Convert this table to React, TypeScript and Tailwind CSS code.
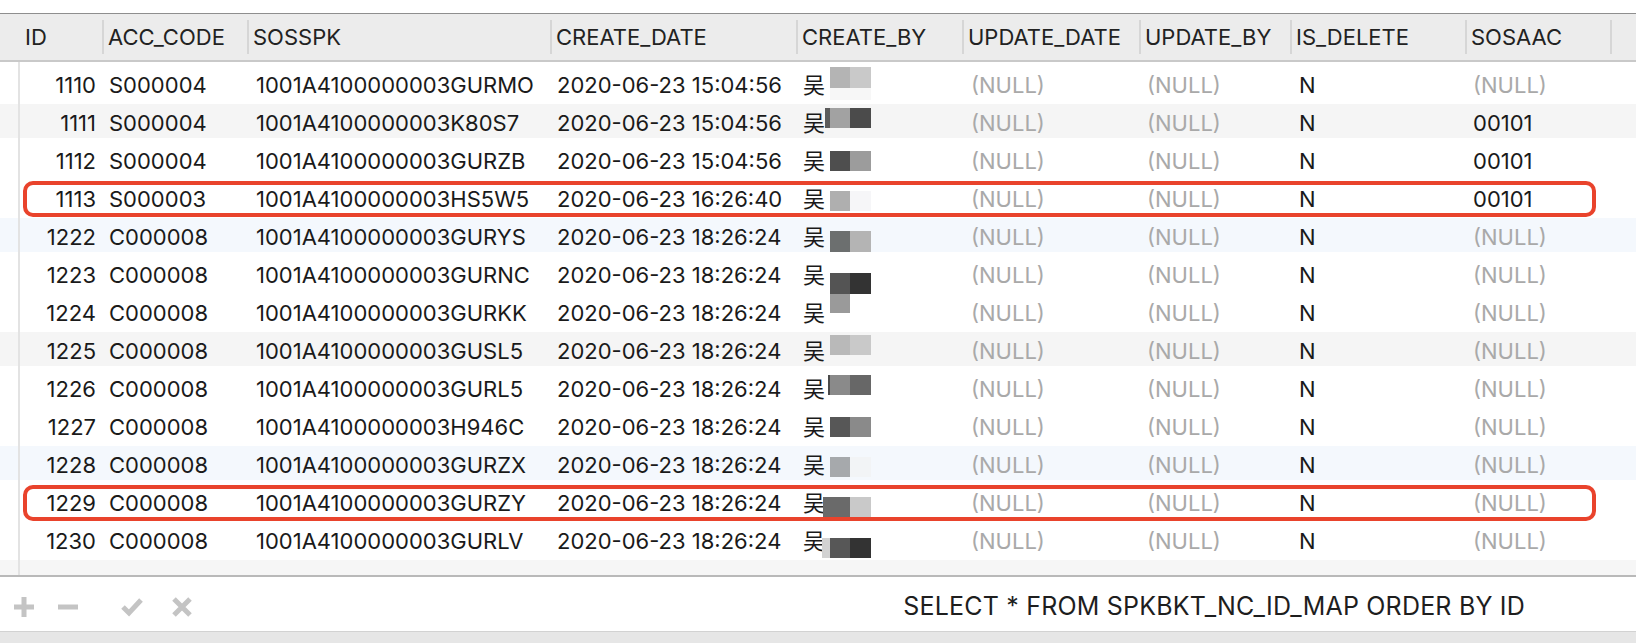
import React from 'react';

type Col = { key: string; label: string; width: number; right?: boolean };

const columns: Col[] = [
  { key: 'id', label: 'ID', width: 82, right: true },
  { key: 'acc', label: 'ACC_CODE', width: 145 },
  { key: 'sosspk', label: 'SOSSPK', width: 303 },
  { key: 'cdate', label: 'CREATE_DATE', width: 246 },
  { key: 'cby', label: 'CREATE_BY', width: 166 },
  { key: 'udate', label: 'UPDATE_DATE', width: 177 },
  { key: 'uby', label: 'UPDATE_BY', width: 151 },
  { key: 'del', label: 'IS_DELETE', width: 175 },
  { key: 'sosaac', label: 'SOSAAC', width: 145 },
];

// mosaic blocks drawn after the name: [x, y, w, h, colour]
type Block = [number, number, number, number, string];

type Row = {
  id: string;
  acc: string;
  sosspk: string;
  date: string;
  sosaac: string | null;
  shade?: string;
  marked?: boolean;
  blocks: Block[];
};

const rows: Row[] = [
  { id: '1110', acc: 'S000004', sosspk: '1001A4100000003GURMO', date: '2020-06-23 15:04:56', sosaac: null,
    blocks: [[8, 1, 20, 21, '#b4b4b4'], [28, 1, 21, 21, '#c9c9c9'], [8, 22, 41, 12, '#f7f7f7']] },
  { id: '1111', acc: 'S000004', sosspk: '1001A4100000003K80S7', date: '2020-06-23 15:04:56', sosaac: '00101', shade: '#f5f5f5',
    blocks: [[3, 4, 5, 20, '#5c5c5c'], [8, 4, 20, 20, '#a2a2a2'], [28, 4, 21, 20, '#4b4b4b']] },
  { id: '1112', acc: 'S000004', sosspk: '1001A4100000003GURZB', date: '2020-06-23 15:04:56', sosaac: '00101',
    blocks: [[8, 9, 20, 20, '#4e4e4e'], [28, 9, 21, 20, '#9c9c9c']] },
  { id: '1113', acc: 'S000003', sosspk: '1001A4100000003HS5W5', date: '2020-06-23 16:26:40', sosaac: '00101', marked: true,
    blocks: [[8, 11, 20, 20, '#afafaf'], [28, 11, 21, 20, '#f6f6f8']] },
  { id: '1222', acc: 'C000008', sosspk: '1001A4100000003GURYS', date: '2020-06-23 18:26:24', sosaac: null, shade: '#f4f8fd',
    blocks: [[8, 13, 20, 21, '#6c6f6f'], [28, 13, 21, 21, '#b4b4b4']] },
  { id: '1223', acc: 'C000008', sosspk: '1001A4100000003GURNC', date: '2020-06-23 18:26:24', sosaac: null,
    blocks: [[8, 17, 20, 21, '#545454'], [28, 17, 21, 21, '#333333']] },
  { id: '1224', acc: 'C000008', sosspk: '1001A4100000003GURKK', date: '2020-06-23 18:26:24', sosaac: null,
    blocks: [[8, 0, 20, 19, '#9a9a9a']] },
  { id: '1225', acc: 'C000008', sosspk: '1001A4100000003GUSL5', date: '2020-06-23 18:26:24', sosaac: null, shade: '#f5f5f5',
    blocks: [[8, 3, 20, 20, '#b9b9b9'], [28, 3, 21, 20, '#c9c9c9']] },
  { id: '1226', acc: 'C000008', sosspk: '1001A4100000003GURL5', date: '2020-06-23 18:26:24', sosaac: null,
    blocks: [[6, 5, 2, 20, '#4a4a4a'], [8, 5, 20, 20, '#8a8a8a'], [28, 5, 21, 20, '#676767']] },
  { id: '1227', acc: 'C000008', sosspk: '1001A4100000003H946C', date: '2020-06-23 18:26:24', sosaac: null,
    blocks: [[8, 9, 20, 20, '#575757'], [28, 9, 21, 20, '#8a8a8a']] },
  { id: '1228', acc: 'C000008', sosspk: '1001A4100000003GURZX', date: '2020-06-23 18:26:24', sosaac: null, shade: '#f4f8fd',
    blocks: [[8, 11, 20, 20, '#a6a9ac'], [28, 11, 21, 20, '#f2f4f6']] },
  { id: '1229', acc: 'C000008', sosspk: '1001A4100000003GURZY', date: '2020-06-23 18:26:24', sosaac: null, marked: true,
    blocks: [[1, 13, 27, 20, '#6a6a6a'], [28, 13, 21, 20, '#c9c9c9']] },
  { id: '1230', acc: 'C000008', sosspk: '1001A4100000003GURLV', date: '2020-06-23 18:26:24', sosaac: null,
    blocks: [[0, 16, 8, 20, '#d2d2d2'], [8, 16, 20, 20, '#575757'], [28, 16, 21, 20, '#333333']] },
];

const font = { fontFamily: 'Inter, "Noto Sans CJK SC", sans-serif' };

function Mosaic({ blocks }: { blocks: Block[] }) {
  return (
    <svg width="50" height="38" viewBox="0 0 50 38" className="shrink-0 -ml-[3px]">
      {blocks.map(([x, y, w, h, c], i) => (
        <rect key={i} x={x} y={y} width={w} height={h} fill={c} />
      ))}
    </svg>
  );
}

function Null() {
  return <span className="text-[#a9a9a9]">(NULL)</span>;
}

function DataRow({ row }: { row: Row }) {
  const w = columns.map((c) => c.width);
  return (
    <div
      className="relative flex h-[38px] items-center text-[#1a1a1a]"
      style={row.shade ? { background: row.shade, boxShadow: 'inset 0 -4px 0 #ffffff' } : undefined}
    >
      <div className="h-full w-[20px] shrink-0 border-r-2 border-[#e3e3e3]" />
      <div className="shrink-0 pr-[6px] text-right" style={{ width: w[0] }}>{row.id}</div>
      <div className="shrink-0 pl-[7px]" style={{ width: w[1] }}>{row.acc}</div>
      <div className="shrink-0 pl-[9px]" style={{ width: w[2] }}>{row.sosspk}</div>
      <div className="shrink-0 pl-[7px]" style={{ width: w[3] }}>{row.date}</div>
      <div className="flex h-full shrink-0 items-center pl-[7px]" style={{ width: w[4] }}>
        <span>吴</span>
        <Mosaic blocks={row.blocks} />
      </div>
      <div className="shrink-0 pl-[9px]" style={{ width: w[5] }}><Null /></div>
      <div className="shrink-0 pl-[8px]" style={{ width: w[6] }}><Null /></div>
      <div className="shrink-0 pl-[9px]" style={{ width: w[7] }}>N</div>
      <div className="shrink-0 pl-[8px]" style={{ width: w[8] }}>{row.sosaac ? row.sosaac : <Null />}</div>
      {row.marked && (
        <div className="pointer-events-none absolute left-[23px] top-[1px] h-[36px] w-[1573px] rounded-[10px] border-[4px] border-[#e9432c]" />
      )}
    </div>
  );
}

export default function App() {
  return (
    <div className="h-[643px] w-[1636px] overflow-hidden bg-white text-[22px]" style={font}>
      <div className="h-[13px]" />
      <div className="h-px bg-[#8e8e8e]" />
      <div className="flex h-[48px] items-center border-b-2 border-[#c9c9c9] bg-[#ececec] text-[#222222]">
        <div className="w-[20px] shrink-0" />
        {columns.map((c, i) => (
          <div key={c.key} className="flex h-full shrink-0 items-center" style={{ width: c.width }}>
            {i > 0 && <div className="h-[34px] w-[2px] bg-[#d6d6d6]" />}
            <span className={i === 0 ? 'pl-[5px]' : 'pl-[4px]'}>{c.label}</span>
          </div>
        ))}
        <div className="flex h-full items-center">
          <div className="h-[34px] w-[2px] bg-[#d6d6d6]" />
        </div>
      </div>
      <div className="flex h-[4px]">
        <div className="h-full w-[20px] border-r-2 border-[#e3e3e3]" />
      </div>
      {rows.map((r) => (
        <DataRow key={r.id} row={r} />
      ))}
      <div className="flex h-[15px] bg-[#f6f6f6]">
        <div className="h-full w-[20px] border-r-2 border-[#e3e3e3]" />
      </div>
      <div className="flex h-[56px] items-center border-t-2 border-[#b9b9b9] pt-[6px]">
        <div className="flex items-center gap-[22px] pl-[13px]">
          <svg width="22" height="22" viewBox="0 0 22 22">
            <path d="M11 1v20M1 11h20" stroke="#c4c4c4" strokeWidth="5" />
          </svg>
          <svg width="22" height="22" viewBox="0 0 22 22">
            <path d="M1 11h20" stroke="#c4c4c4" strokeWidth="5" />
          </svg>
          <svg width="22" height="22" viewBox="0 0 22 22" className="ml-[20px]">
            <path d="M2 11l6 6L20 4" stroke="#c4c4c4" strokeWidth="5" fill="none" strokeLinejoin="miter" />
          </svg>
          <svg width="22" height="22" viewBox="0 0 22 22" className="ml-[6px]">
            <path d="M3 3l16 16M19 3L3 19" stroke="#c4c4c4" strokeWidth="5" />
          </svg>
        </div>
        <div className="ml-auto mr-[111px] text-[25px] tracking-[0.2px] text-[#1e1e1e]">
          SELECT * FROM SPKBKT_NC_ID_MAP ORDER BY ID
        </div>
      </div>
      <div className="h-[12px] border-t border-[#d2d2d2] bg-[#e6e6e6]" />
    </div>
  );
}
